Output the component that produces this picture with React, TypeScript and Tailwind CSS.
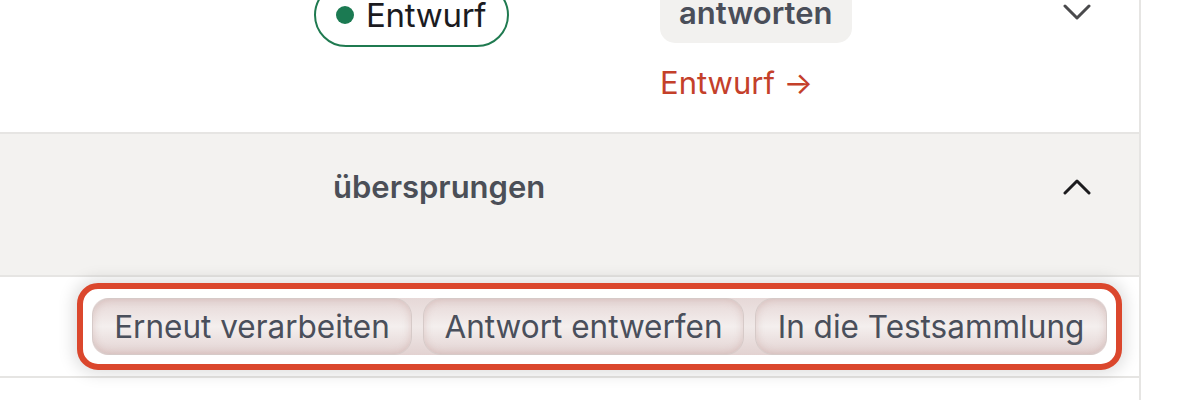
import React from "react";

function Chevron({ up, className }: { up?: boolean; className?: string }) {
  return (
    <svg width="28" height="16" viewBox="0 0 28 16" className={className} fill="none">
      <polyline
        points={up ? "2,14 14,2 26,14" : "2,2 14,14 26,2"}
        stroke="currentColor"
        strokeWidth="3"
        strokeLinecap="round"
        strokeLinejoin="round"
      />
    </svg>
  );
}

const buttons = [
  { label: "Erneut verarbeiten", w: "w-[320px]" },
  { label: "Antwort entwerfen", w: "w-[321px]" },
  { label: "In die Testsammlung", w: "w-[352px]" },
];

export default function App() {
  return (
    <div className="w-[1200px] h-[400px] overflow-hidden bg-white font-['Inter',sans-serif]">
      <div className="w-[1141px] h-full border-r-2 border-[#e6e5e3] flex flex-col">
        {/* Row 1 */}
        <div className="h-[134px] shrink-0 border-b-2 border-[#e6e5e3] flex items-start">
          <div className="w-[314px] shrink-0" />
          <div className="w-[346px] shrink-0 -mt-[17px]">
            <div className="inline-flex items-center h-[64px] rounded-full border-2 border-[#1f7a50] pl-[20px] pr-[21px] gap-[12px]">
              <span className="w-[18px] h-[18px] rounded-full bg-[#1b7a52]" />
              <span className="text-[33px] text-[#1b1b1f] leading-none tracking-[-0.3px]">Entwurf</span>
            </div>
          </div>
          <div className="w-[392px] shrink-0 -mt-[18px] flex flex-col items-start">
            <div className="h-[61px] flex items-center rounded-[15px] bg-[#f2f1ef] px-[19px]">
              <span className="text-[31px] font-semibold text-[#4a4e59] leading-none">antworten</span>
            </div>
            <div className="mt-[21px] text-[31px] leading-[38px] text-[#c4402a]">Entwurf →</div>
          </div>
          <div className="flex-1 flex justify-start pl-[11px] pt-[4px] text-[#4a4a4c]">
            <Chevron />
          </div>
        </div>
        {/* Row 2 */}
        <div className="h-[143px] shrink-0 bg-[#f3f2f0] border-b-2 border-[#e6e5e3] flex items-start pt-[35px]">
          <div className="w-[333px] shrink-0" />
          <div className="w-[730px] shrink-0 text-[31px] font-semibold text-[#4b4f57] leading-[36px]">
            übersprungen
          </div>
          <div className="pt-[10px] text-[#1c1c1e]">
            <Chevron up />
          </div>
        </div>
        {/* Row 3 */}
        <div className="h-[101px] shrink-0 border-b-2 border-[#e6e5e3] flex items-center justify-end pr-[17px]">
          <div className="rounded-[21px] border-[6px] border-[#db472d] bg-white p-[9px] shadow-[0_0_16px_4px_rgba(0,0,0,0.13)]">
            <div className="flex gap-[11px] rounded-[16px] bg-gradient-to-b from-[#e6d8d7] via-[#f0e9e8] to-[#e2d2d1]">
              {buttons.map((b) => (
                <div
                  key={b.label}
                  className={`${b.w} h-[57px] flex items-center justify-center rounded-[18px] border-[1.5px] border-[#d6cac8] bg-gradient-to-b from-[#e6d7d6] via-[#f4efee] to-[#e3d3d2] shadow-[inset_0_0_9px_rgba(170,110,105,0.28)] text-[31.5px] text-[#4a4f5b] leading-none`}
                >
                  {b.label}
                </div>
              ))}
            </div>
          </div>
        </div>
      </div>
    </div>
  );
}
